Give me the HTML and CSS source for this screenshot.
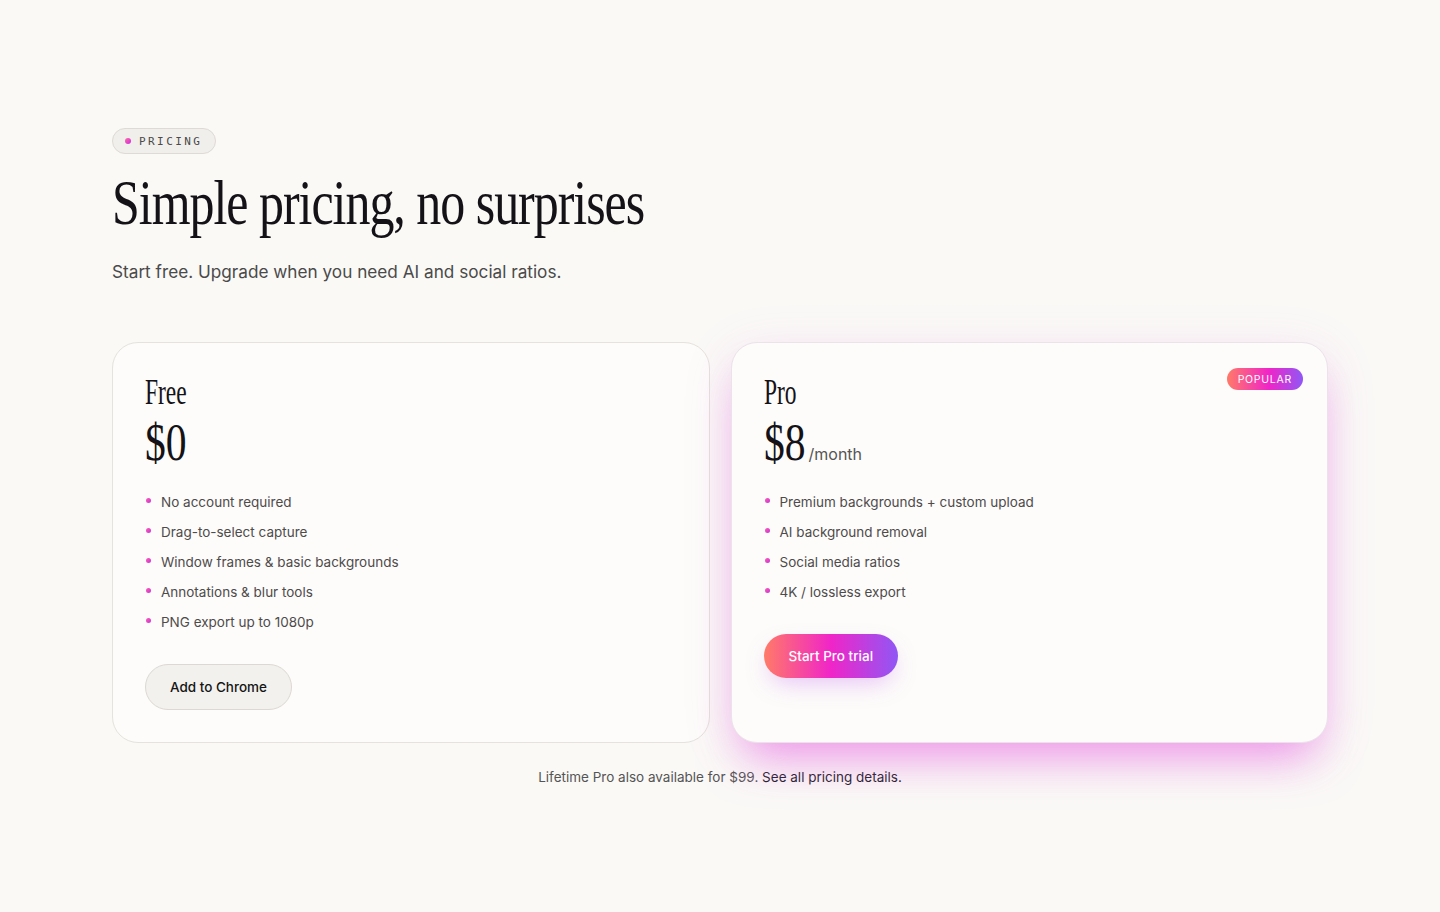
FILE: index.html
```html
<!DOCTYPE html>
<html lang="en">
<head>
<meta charset="utf-8">
<title>Pricing</title>
<link rel="stylesheet" href="styles.css">
</head>
<body>
<section class="pricing">
  <div class="eyebrow"><span class="dot"></span>PRICING</div>
  <h1 class="title"><span>Simple pricing, no surprises</span></h1>
  <p class="lead">Start free. Upgrade when you need AI and social ratios.</p>

  <div class="cards">
    <article class="card">
      <h2 class="plan"><span>Free</span></h2>
      <div class="price"><span class="amount">$0</span></div>
      <ul class="features">
        <li>No account required</li>
        <li>Drag-to-select capture</li>
        <li>Window frames &amp; basic backgrounds</li>
        <li>Annotations &amp; blur tools</li>
        <li>PNG export up to 1080p</li>
      </ul>
      <a class="btn btn-ghost" href="#">Add to Chrome</a>
    </article>

    <article class="card card-pro">
      <span class="popular">POPULAR</span>
      <h2 class="plan"><span>Pro</span></h2>
      <div class="price"><span class="amount">$8</span><span class="per">/month</span></div>
      <ul class="features">
        <li>Premium backgrounds + custom upload</li>
        <li>AI background removal</li>
        <li>Social media ratios</li>
        <li>4K / lossless export</li>
      </ul>
      <a class="btn btn-grad" href="#">Start Pro trial</a>
    </article>
  </div>

  <p class="note">Lifetime Pro also available for $99. <a href="#">See all pricing details.</a></p>
</section>
</body>
</html>
```

FILE: styles.css
```css
* { box-sizing: border-box; }
html, body { margin: 0; padding: 0; }
body {
  background: #faf9f6;
  font-family: Inter, "Noto Sans", sans-serif;
  color: #1a1a1a;
  width: 1440px;
  height: 912px;
  overflow: hidden;
}
.pricing {
  padding: 128px 112px 0;
  display: flex;
  flex-direction: column;
}
.eyebrow {
  align-self: flex-start;
  display: inline-flex;
  align-items: center;
  gap: 8px;
  height: 26px;
  padding: 0 13px 0 12px;
  border: 1px solid #dedad5;
  background: #f1efec;
  border-radius: 999px;
  font-family: "DejaVu Sans Mono", "Liberation Mono", monospace;
  font-size: 11px;
  letter-spacing: 0.22em;
  color: #4a4a4a;
}
.dot {
  width: 6px; height: 6px; border-radius: 50%;
  background: linear-gradient(135deg, #ff6fa0, #d026e0);
}
.title {
  margin: 13px 0 0;
  font-family: "Liberation Serif", "DejaVu Serif", serif;
  font-weight: 400;
  font-size: 64px;
  line-height: 72px;
  color: #141217;
  letter-spacing: -0.02em;
}
.title span {
  display: inline-block;
  transform: scaleX(0.78);
  transform-origin: left center;
}
.plan span {
  display: inline-block;
  transform: scaleX(0.67);
  transform-origin: left center;
}
.lead {
  margin: 22px 0 0;
  font-size: 17.2px;
  color: #4a4a4a;
}
.cards {
  margin-top: 60px;
  display: grid;
  grid-template-columns: 1fr 1fr;
  gap: 21px;
  height: 399px;
}
.card {
  position: relative;
  background: #fdfcfa;
  border: 1px solid #e6e2dd;
  border-radius: 26px;
  padding: 30px 32px 32px;
  display: flex;
  flex-direction: column;
  align-items: flex-start;
}
.card-pro {
  border-color: #ebe2ea;
  box-shadow: 0 26px 46px -14px rgba(232, 90, 225, 0.6), 0 10px 50px rgba(220, 120, 230, 0.16);
}
.plan {
  margin: 0;
  font-family: "Liberation Serif", serif;
  font-weight: 400;
  font-size: 35px;
  line-height: 40px;
  color: #141217;
}
.price {
  display: flex;
  align-items: baseline;
  gap: 1px;
  margin-top: 0;
}
.amount {
  font-family: "Liberation Serif", serif;
  font-size: 52px;
  line-height: 60px;
  color: #141217;
  display: inline-block;
  transform: scaleX(0.8);
  transform-origin: left center;
  margin-right: -8px;
}
.per {
  font-size: 16px;
  color: #555;
}
.features {
  list-style: none;
  margin: 14px 0 0;
  padding: 0;
}
.features li {
  position: relative;
  padding-left: 16px;
  font-size: 13.5px;
  line-height: 30px;
  color: #4e4b4b;
}
.features li::before {
  content: "";
  position: absolute;
  left: 1px; top: 11px;
  width: 5px; height: 5px;
  border-radius: 50%;
  background: linear-gradient(135deg, #ff5fa8, #c92fe0);
}
.btn {
  display: inline-flex;
  align-items: center;
  justify-content: center;
  border-radius: 999px;
  text-decoration: none;
  font-size: 13.5px;
  font-weight: 500;
}
.btn-ghost {
  margin-top: 27px;
  height: 46px;
  padding: 0 24px;
  background: #f3f1ee;
  border: 1px solid #dcd8d3;
  color: #151515;
}
.btn-grad {
  margin-top: 27px;
  height: 44px;
  padding: 0 25px;
  color: #fff;
  background: linear-gradient(90deg, #ff7a68 0%, #f025c8 50%, #9057f5 100%);
  box-shadow: 0 10px 24px -6px rgba(190, 80, 240, 0.35);
}
.popular {
  position: absolute;
  top: 25px;
  right: 24px;
  height: 22px;
  padding: 0 11px;
  display: inline-flex;
  align-items: center;
  border-radius: 999px;
  font-size: 10.5px;
  letter-spacing: 0.07em;
  font-weight: 400;
  color: #fff;
  background: linear-gradient(90deg, #ff7a68 0%, #f025c8 55%, #9057f5 100%);
}
.note {
  margin: 28px 0 0;
  text-align: center;
  font-size: 13.5px;
  color: #555;
}
.note a {
  color: #231d2a;
  text-decoration: none;
}
```
